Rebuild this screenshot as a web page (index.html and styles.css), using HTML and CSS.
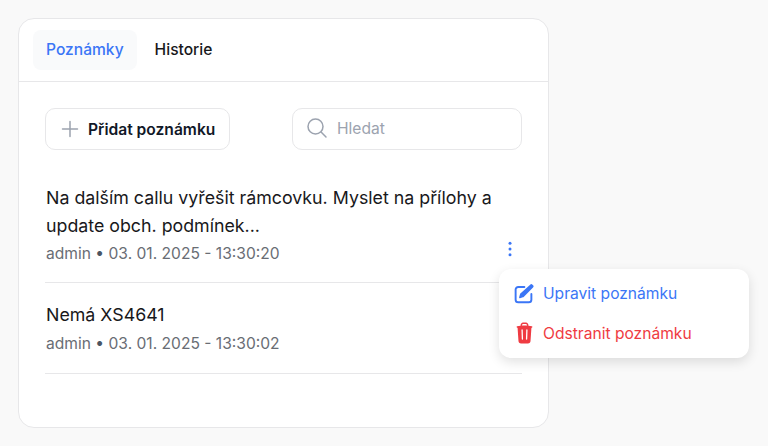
FILE: index.html
```html
<!DOCTYPE html>
<html lang="cs">
<head>
<meta charset="utf-8">
<title>Poznámky</title>
<link rel="stylesheet" href="styles.css">
</head>
<body>
<main class="card">
  <nav class="tabs">
    <div class="tab tab-active">Poznámky</div>
    <div class="tab">Historie</div>
  </nav>
  <section class="body">
    <div class="toolbar">
      <button class="add-btn">
        <svg class="add-icon" viewBox="0 0 24 24" fill="none" stroke="#9ca3af" stroke-width="1.5" stroke-linecap="round"><path d="M12 4.5v15M4.5 12h15"/></svg>
        <span>Přidat poznámku</span>
      </button>
      <div class="search">
        <svg class="search-icon" viewBox="0 0 24 24" fill="none" stroke="#9ca3af" stroke-width="1.5" stroke-linecap="round" stroke-linejoin="round"><path d="m21 21-5.197-5.197m0 0A7.5 7.5 0 1 0 5.196 5.196a7.5 7.5 0 0 0 10.607 10.607Z"/></svg>
        <span>Hledat</span>
      </div>
    </div>
    <article class="note note-first">
      <p class="note-text">Na dalším callu vyřešit rámcovku. Myslet na přílohy a update obch. podmínek...</p>
      <div class="note-foot">
        <span class="meta">admin <span class="sep">•</span> 03. 01. 2025 - 13:30:20</span>
        <svg class="dots" viewBox="0 0 4 16" fill="#3b76f6"><circle cx="2" cy="2.2" r="1.5"/><circle cx="2" cy="8" r="1.5"/><circle cx="2" cy="13.8" r="1.5"/></svg>
      </div>
    </article>
    <article class="note">
      <p class="note-text">Nemá XS4641</p>
      <div class="note-foot"><span class="meta">admin <span class="sep">•</span> 03. 01. 2025 - 13:30:02</span></div>
    </article>
  </section>
</main>
<div class="menu">
  <div class="menu-item menu-edit">
    <svg class="edit-icon" viewBox="0 0 24 24"><path d="M13 4.5H6a3 3 0 0 0-3 3V19a3 3 0 0 0 3 3h12a3 3 0 0 0 3-3v-6.5" fill="none" stroke="currentColor" stroke-width="2.2" stroke-linecap="round"/><path d="M19.6 1.9a1.9 1.9 0 0 1 2.7 0l.6.6a1.9 1.9 0 0 1 0 2.7L12.2 15.9a2 2 0 0 1-.9.5l-3.3.9a.8.8 0 0 1-1-1l.9-3.3a2 2 0 0 1 .5-.9Z" fill="currentColor"/></svg>
    <span>Upravit poznámku</span>
  </div>
  <div class="menu-item menu-del">
    <svg class="trash-icon" viewBox="0 0 24 24" preserveAspectRatio="none" fill="currentColor"><path fill-rule="evenodd" clip-rule="evenodd" d="M16.5 4.478v.227a48.816 48.816 0 0 1 3.878.512.75.75 0 1 1-.256 1.478l-.209-.035-1.005 13.07a3 3 0 0 1-2.991 2.77H8.084a3 3 0 0 1-2.991-2.77L4.087 6.66l-.209.035a.75.75 0 0 1-.256-1.478A48.567 48.567 0 0 1 7.5 4.705v-.227c0-1.564 1.213-2.9 2.816-2.951a52.662 52.662 0 0 1 3.369 0c1.603.051 2.815 1.387 2.815 2.951Zm-6.136-1.452a51.196 51.196 0 0 1 3.273 0C14.39 3.05 15 3.684 15 4.478v.113a49.488 49.488 0 0 0-6 0v-.113c0-.794.609-1.428 1.364-1.452Zm-.355 5.945a.75.75 0 1 0-1.5.058l.347 9a.75.75 0 1 0 1.499-.058l-.346-9Zm5.48.058a.75.75 0 1 0-1.498-.058l-.347 9a.75.75 0 0 0 1.5.058l.345-9Z"/></svg>
    <span>Odstranit poznámku</span>
  </div>
</div>
</body>
</html>
```

FILE: styles.css
```css
* { box-sizing: border-box; }
html, body { margin: 0; height: 100%; }
body {
  background: #f9f9f9;
  font-family: Inter, "Liberation Sans", sans-serif;
  color: #111827;
  padding: 18px 0 0 18px;
  overflow: hidden;
  position: relative;
}
.card {
  width: 531px;
  height: 410px;
  background: #fff;
  border: 1px solid #e7e7e9;
  border-radius: 16px;
}
.tabs {
  display: flex;
  gap: 5px;
  padding: 11px 14px;
  height: 63px;
  border-bottom: 1px solid #e7e7e9;
}
.tab {
  height: 40px;
  padding: 0 13px;
  line-height: 40px;
  font-size: 15.6px;
  font-weight: 500;
  border-radius: 8px;
  color: #18181b;
}
.tab-active { background: #f9fafb; color: #3b76f6; }
.body { padding: 26px 26px 0; }
.toolbar { display: flex; justify-content: space-between; margin-bottom: 34px; }
.add-btn {
  display: flex;
  align-items: center;
  gap: 6px;
  width: 185px;
  height: 42px;
  padding: 0 12px;
  background: #fff;
  border: 1.5px solid #e7e7e9;
  border-radius: 10px;
  font: 600 15.6px Inter, "Liberation Sans", sans-serif;
  color: #111827;
  white-space: nowrap;
}
.add-icon { width: 24px; height: 24px; flex: none; }
.search {
  display: flex;
  align-items: center;
  gap: 8px;
  width: 230px;
  height: 42px;
  padding: 0 12px 2px;
  border: 1.5px solid #e7e7e9;
  border-radius: 10px;
  font-size: 15.6px;
  color: #9ca3af;
}
.search-icon { width: 24px; height: 24px; flex: none; }
.note { border-bottom: 1px solid #e7e7e9; padding-bottom: 16px; }
.note-first { margin-bottom: 18px; }
.note-text { margin: 0; padding-left: 1px; font-size: 17.8px; line-height: 28px; color: #18181b; }
.note-foot { display: flex; justify-content: space-between; align-items: center; height: 28px; }
.note-first .note-foot { height: 26px; }
.meta { padding-left: 1px; font-size: 15.6px; color: #696d74; }
.sep { color: #4b5563; }
.dots { width: 4px; height: 16px; margin-right: 10px; margin-top: -8px; }
.menu {
  position: absolute;
  left: 499px;
  top: 269px;
  width: 250px;
  height: 89px;
  padding: 4px 13px;
  background: #fff;
  border-radius: 12px;
  box-shadow: 0 4px 12px rgba(0, 0, 0, 0.12);
}
.menu-item {
  display: flex;
  align-items: center;
  gap: 7px;
  height: 40px;
  font-size: 15.6px;
  font-weight: 400;
}
.edit-icon { width: 21px; height: 21px; margin: 0 2px 0 1px; flex: none; }
.trash-icon { width: 21px; height: 24px; margin: 0 1.5px; flex: none; }
.menu-edit { color: #3b76f6; }
.menu-del { color: #ef3b42; }
```
